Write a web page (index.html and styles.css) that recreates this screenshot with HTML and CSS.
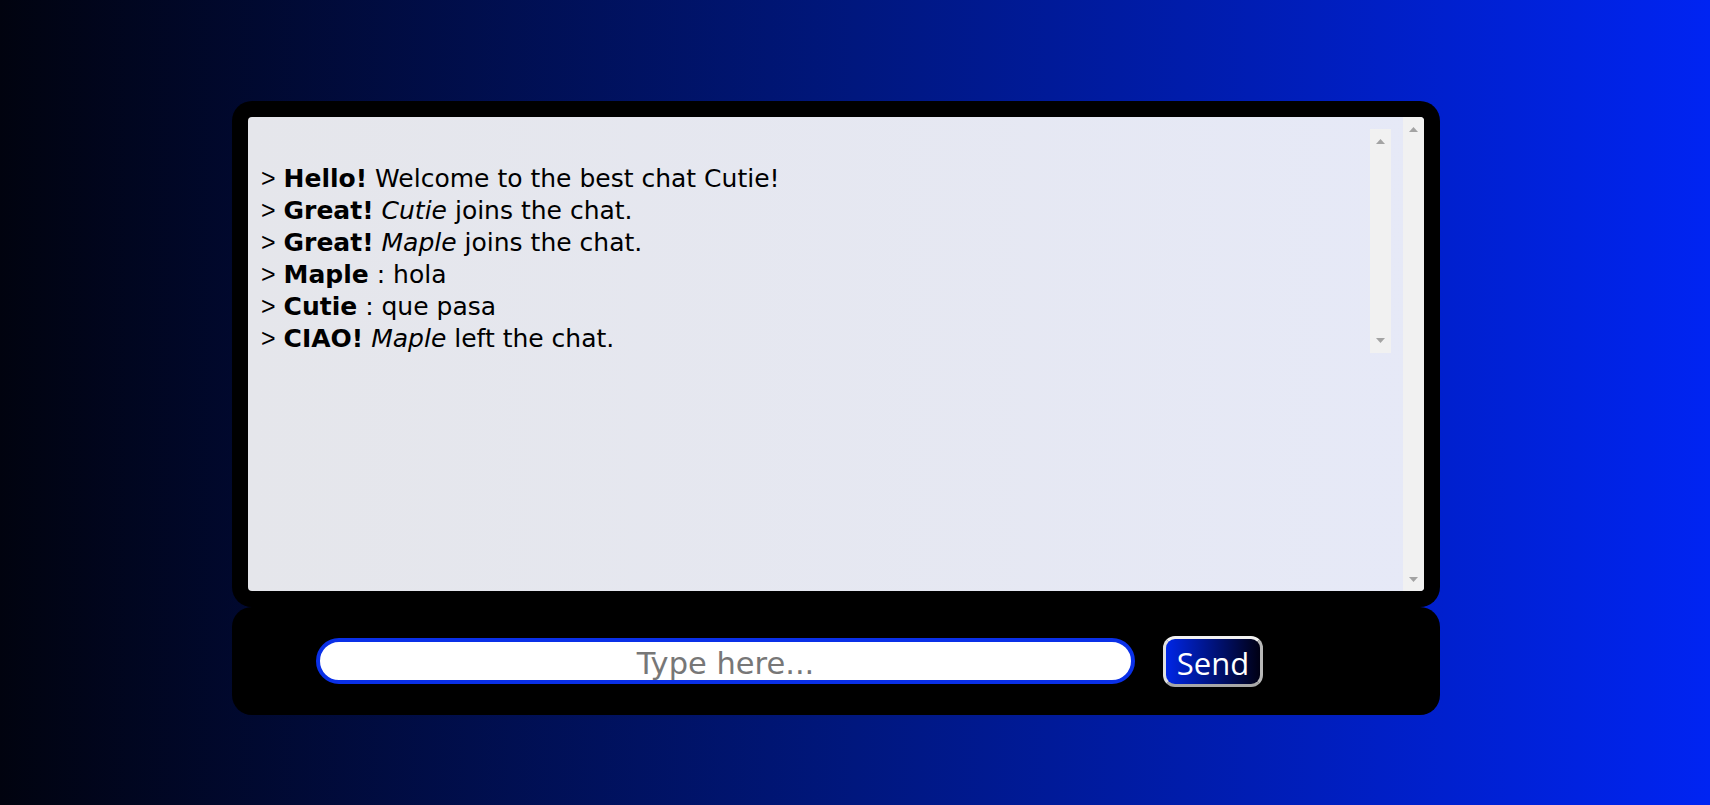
FILE: index.html
```html
<!DOCTYPE html>
<html lang="en">
<head>
<meta charset="utf-8">
<title>Chat</title>
<link rel="stylesheet" href="styles.css">
</head>
<body>
<main class="chat">
  <section class="chat-window">
    <div class="panel">
      <div class="panel-body">
        <div class="messages">
          <div class="messages-list">
            <div class="msg">&nbsp;</div>
            <div class="msg"><span class="prompt">&gt;</span> <b>Hello!</b> Welcome to the best chat Cutie!</div>
            <div class="msg"><span class="prompt">&gt;</span> <b>Great!</b> <i>Cutie</i> joins the chat.</div>
            <div class="msg"><span class="prompt">&gt;</span> <b>Great!</b> <i>Maple</i> joins the chat.</div>
            <div class="msg"><span class="prompt">&gt;</span> <b>Maple</b> : hola</div>
            <div class="msg"><span class="prompt">&gt;</span> <b>Cutie</b> : que pasa</div>
            <div class="msg"><span class="prompt">&gt;</span> <b>CIAO!</b> <i>Maple</i> left the chat.</div>
          </div>
          <div class="scrollbar inner-bar">
            <svg class="arrow" width="9" height="5" viewBox="0 0 9 5"><polygon points="0,5 4.5,0 9,5" fill="#a3a3a3"/></svg>
            <svg class="arrow" width="9" height="5" viewBox="0 0 9 5"><polygon points="0,0 9,0 4.5,5" fill="#a3a3a3"/></svg>
          </div>
        </div>
      </div>
      <div class="scrollbar outer-bar">
        <svg class="arrow" width="9" height="5" viewBox="0 0 9 5"><polygon points="0,5 4.5,0 9,5" fill="#a3a3a3"/></svg>
        <svg class="arrow" width="9" height="5" viewBox="0 0 9 5"><polygon points="0,0 9,0 4.5,5" fill="#a3a3a3"/></svg>
      </div>
    </div>
  </section>
  <section class="chat-input">
    <input class="text-input" type="text" placeholder="Type here...">
    <button class="send-btn" type="button">Send</button>
  </section>
</main>
</body>
</html>
```

FILE: styles.css
```css
html, body {
  margin: 0;
  padding: 0;
}
body {
  width: 1710px;
  height: 805px;
  overflow: hidden;
  background: linear-gradient(to right, #01030f 0%, #00177e 50%, #0024f2 100%);
  font-family: "DejaVu Sans", sans-serif;
}
.chat {
  width: 1208px;
  margin-left: 232px;
  padding-top: 101px;
  display: flex;
  flex-direction: column;
}
.chat-window {
  background: #000;
  border-radius: 20px;
  padding: 16px;
  height: 506px;
  box-sizing: border-box;
}
.panel {
  height: 474px;
  border-radius: 4px;
  background: linear-gradient(to right, #e5e6eb, #e6e9f7);
  display: flex;
  overflow: hidden;
}
.panel-body {
  flex: 1;
  padding: 12px;
}
.messages {
  height: 224px;
  display: flex;
}
.messages-list {
  flex: 1;
  padding: 2px 0 0 1px;
  font-family: "DejaVu Sans", sans-serif;
  font-size: 25px;
  line-height: 32px;
  color: #000;
}
.msg {
  white-space: nowrap;
  height: 32px;
}
.msg b {
  font-weight: 700;
}
.prompt {
  font-family: "Liberation Sans", sans-serif;
  line-height: 0;
}
.scrollbar {
  width: 21px;
  background: #f1f1f1;
  display: flex;
  flex-direction: column;
  justify-content: space-between;
  align-items: center;
  box-sizing: border-box;
  padding: 10px 0;
}
.outer-bar {
  padding: 10px 0 9px;
}
.arrow {
  display: block;
}
.chat-input {
  height: 108px;
  background: #000;
  border-radius: 20px;
  display: flex;
  align-items: center;
  padding-left: 84px;
  gap: 28px;
  box-sizing: border-box;
}
.text-input {
  width: 819px;
  height: 46px;
  box-sizing: border-box;
  border: 4px solid #0a30e8;
  border-radius: 23px;
  background: #fff;
  text-align: center;
  font-family: "DejaVu Sans", sans-serif;
  font-size: 30.5px;
  color: #333;
  outline: none;
  padding: 4px 16px 0;
}
.text-input::placeholder {
  color: #777;
}
.send-btn {
  width: 100px;
  height: 51px;
  box-sizing: border-box;
  border: 3px solid;
  border-color: #f2f2f2 #b8b8b8 #a8a8a8 #e0e0e0;
  border-radius: 12px;
  background: linear-gradient(to right, #0026e6, #000014);
  color: #fff;
  font-family: "Open Sans", "DejaVu Sans", sans-serif;
  font-size: 31px;
  padding: 4px 0 0;
  line-height: 1;
}
```
